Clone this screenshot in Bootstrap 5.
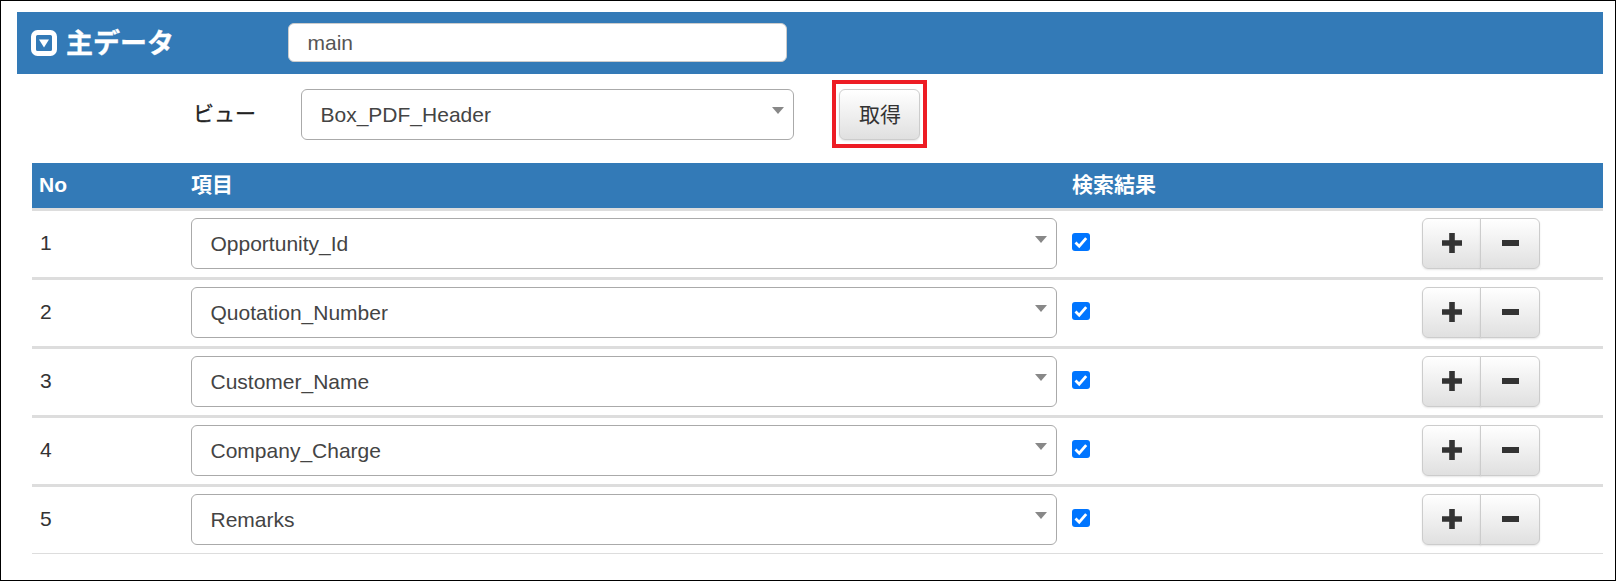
<!DOCTYPE html>
<html lang="ja">
<head>
<meta charset="utf-8">
<link rel="stylesheet" href="https://cdn.jsdelivr.net/npm/bootstrap@5.3.0/dist/css/bootstrap.min.css">
<style>
html,body{height:100%;}
body{font-family:"Liberation Sans","Noto Sans CJK JP",sans-serif;color:#333;background:#fff;}
.frame{height:581px;border:1px solid #000;padding:11px 12px 0 16px;overflow:hidden;}
.sec-head{background:#337ab7;height:62px;padding-left:14px;}
.sec-title{width:257px;color:#fff;font-size:27px;font-weight:700;gap:9px;line-height:1;}
.sec-title span{padding-top:2px;-webkit-text-stroke:.3px #fff;}
.sec-input{width:499px;height:39px;margin-top:-1px;border:1px solid #ccc;border-radius:6px;background:#fff;padding:0 18.500px;font-size:21px;color:#555;box-shadow:none;}
.view-row{height:89px;padding-left:176px;padding-top:15px;}
.view-label{width:108px;height:51px;line-height:49px;font-size:21px;color:#222;-webkit-text-stroke:.3px #222;}
.sel{position:relative;height:51px;border:1px solid #aaa;border-radius:6px;background:#fff;padding:0 18.500px;font-size:21px;color:#444;display:flex;align-items:center;}
.sel::after{content:"";position:absolute;right:9px;top:17px;border-style:solid;border-width:7px 6px 0;border-color:#888 transparent transparent;}
.sel-view{width:493px;}
.get-box{margin-left:38px;margin-top:-9px;border:4px solid #ed1c24;padding:5px 3px 4px;align-self:flex-start;}
.gbtn{background:linear-gradient(#fff,#e0e0e0);border:1px solid #ccc;border-radius:6px;color:#333;box-shadow:0 1px 2px rgba(0,0,0,.1);font-size:21px;}
.get-btn{width:81px;height:51px;padding:0 0 0 1px;display:block;}
.data-wrap{padding-left:15px;}
.dtab{width:1571px;table-layout:fixed;border-collapse:separate;border-spacing:0;margin:0;}
.dtab th{background:#337ab7;color:#fff;height:48px;border-bottom:3px solid #ddd;font-size:21px;font-weight:700;padding:0 0 2px 7px;vertical-align:middle;}
.dtab th.c2,.dtab th.c3{padding-left:0;}
.dtab td{height:69px;border-bottom:3px solid #ddd;padding:0;vertical-align:top;font-size:21px;color:#333;}
.dtab tr:last-child td{height:67px;border-bottom-width:1px;}
.dtab td.no{padding:19px 0 0 8px;line-height:1.2;}
.dtab td.pick,.dtab td.chk,.dtab td.ops{padding-top:7px;}
.sel-item{width:866px;}
.dtab td.chk .form-check-input{width:18px;height:18px;margin:15px 0 0 0;display:block;border-radius:3px;border:0;background-color:#0075ff;background-size:100% 100%;background-image:url("data:image/svg+xml,%3Csvg xmlns='http://www.w3.org/2000/svg' viewBox='0 0 18 18'%3E%3Cpath d='M3.500 9.500l3.700 3.700 7-8' fill='none' stroke='%23fff' stroke-width='2.800'/%3E%3C/svg%3E");}
.ops-group{display:flex;}
.ops-group .gbtn{height:51px;padding:0 0 2px;}
.ops-plus{width:59px;border-radius:6px 0 0 6px;}
.ops-minus{width:60px;margin-left:-1px;border-radius:0 6px 6px 0;}
.ops-group .gbtn svg{display:block;margin:0 auto;}
</style>
</head>
<body>
<div class="frame">
  <div class="sec-head d-flex align-items-center">
    <div class="sec-title d-flex align-items-center">
      <svg width="26" height="26" viewBox="0 0 26 26"><rect x="2.500" y="2.500" width="21" height="21" rx="4" fill="#337ab7" stroke="#fff" stroke-width="5"/><path d="M8 9.500h10l-5 8z" fill="#fff"/></svg>
      <span>主データ</span>
    </div>
    <input class="sec-input" type="text" value="main">
  </div>
  <div class="view-row d-flex align-items-start">
    <div class="view-label">ビュー</div>
    <div class="sel sel-view">Box_PDF_Header</div>
    <div class="get-box"><button class="gbtn get-btn" type="button">取得</button></div>
  </div>
  <div class="data-wrap">
    <table class="dtab">
      <colgroup><col style="width:159px"><col style="width:881px"><col style="width:350px"><col></colgroup>
      <thead><tr><th>No</th><th class="c2">項目</th><th class="c3">検索結果</th><th></th></tr></thead>
      <tbody>
        <tr><td class="no">1</td><td class="pick"><div class="sel sel-item">Opportunity_Id</div></td><td class="chk"><input class="form-check-input" type="checkbox" checked></td><td class="ops"><div class="ops-group"><button class="gbtn ops-plus" type="button"><svg width="20" height="20" viewBox="0 0 20 20"><path d="M7.200 0h5.600v7.200H20v5.600h-7.200V20H7.200v-7.200H0V7.200h7.200z" fill="#333"/></svg></button><button class="gbtn ops-minus" type="button"><svg width="17" height="20" viewBox="0 0 17 20"><path d="M0 7h17v6H0z" fill="#333"/></svg></button></div></td></tr>
        <tr><td class="no">2</td><td class="pick"><div class="sel sel-item">Quotation_Number</div></td><td class="chk"><input class="form-check-input" type="checkbox" checked></td><td class="ops"><div class="ops-group"><button class="gbtn ops-plus" type="button"><svg width="20" height="20" viewBox="0 0 20 20"><path d="M7.200 0h5.600v7.200H20v5.600h-7.200V20H7.200v-7.200H0V7.200h7.200z" fill="#333"/></svg></button><button class="gbtn ops-minus" type="button"><svg width="17" height="20" viewBox="0 0 17 20"><path d="M0 7h17v6H0z" fill="#333"/></svg></button></div></td></tr>
        <tr><td class="no">3</td><td class="pick"><div class="sel sel-item">Customer_Name</div></td><td class="chk"><input class="form-check-input" type="checkbox" checked></td><td class="ops"><div class="ops-group"><button class="gbtn ops-plus" type="button"><svg width="20" height="20" viewBox="0 0 20 20"><path d="M7.200 0h5.600v7.200H20v5.600h-7.200V20H7.200v-7.200H0V7.200h7.200z" fill="#333"/></svg></button><button class="gbtn ops-minus" type="button"><svg width="17" height="20" viewBox="0 0 17 20"><path d="M0 7h17v6H0z" fill="#333"/></svg></button></div></td></tr>
        <tr><td class="no">4</td><td class="pick"><div class="sel sel-item">Company_Charge</div></td><td class="chk"><input class="form-check-input" type="checkbox" checked></td><td class="ops"><div class="ops-group"><button class="gbtn ops-plus" type="button"><svg width="20" height="20" viewBox="0 0 20 20"><path d="M7.200 0h5.600v7.200H20v5.600h-7.200V20H7.200v-7.200H0V7.200h7.200z" fill="#333"/></svg></button><button class="gbtn ops-minus" type="button"><svg width="17" height="20" viewBox="0 0 17 20"><path d="M0 7h17v6H0z" fill="#333"/></svg></button></div></td></tr>
        <tr><td class="no">5</td><td class="pick"><div class="sel sel-item">Remarks</div></td><td class="chk"><input class="form-check-input" type="checkbox" checked></td><td class="ops"><div class="ops-group"><button class="gbtn ops-plus" type="button"><svg width="20" height="20" viewBox="0 0 20 20"><path d="M7.200 0h5.600v7.200H20v5.600h-7.200V20H7.200v-7.200H0V7.200h7.200z" fill="#333"/></svg></button><button class="gbtn ops-minus" type="button"><svg width="17" height="20" viewBox="0 0 17 20"><path d="M0 7h17v6H0z" fill="#333"/></svg></button></div></td></tr>
      </tbody>
    </table>
  </div>
</div>
<script src="https://cdn.jsdelivr.net/npm/bootstrap@5.3.0/dist/js/bootstrap.bundle.min.js"></script>
</body>
</html>
